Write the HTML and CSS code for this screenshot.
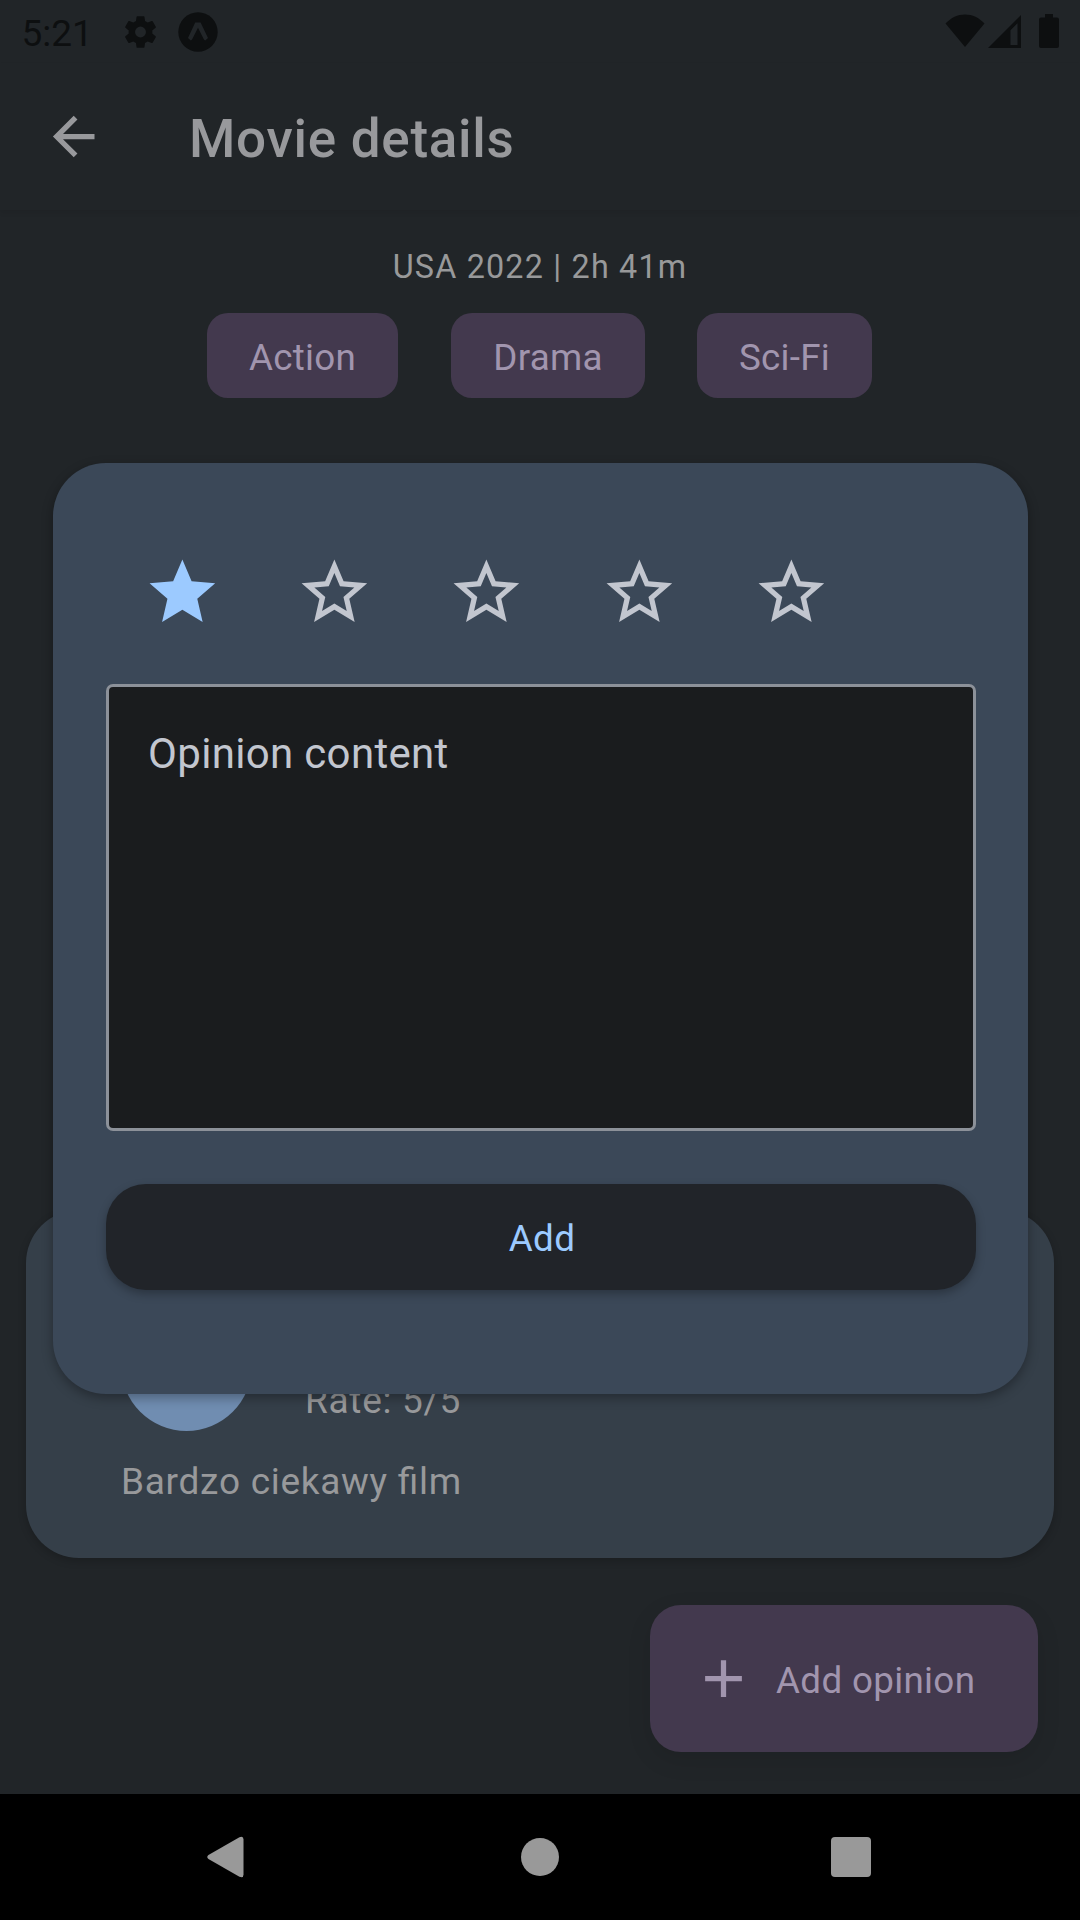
FILE: index.html
```html
<!DOCTYPE html>
<html lang="en">
<head>
<meta charset="utf-8">
<title>Movie details</title>
<link rel="stylesheet" href="styles.css">
</head>
<body>
<div class="screen">
  <div class="status-bar">
    <span class="clock">5:21</span>
    <svg class="gear" viewBox="2 2 20 20"><path d="M19.14 12.94c.04-.3.06-.61.06-.94 0-.32-.02-.64-.07-.94l2.03-1.58a.49.49 0 0 0 .12-.61l-1.92-3.32a.488.488 0 0 0-.59-.22l-2.39.96c-.5-.38-1.03-.7-1.62-.94l-.36-2.54a.484.484 0 0 0-.48-.41h-3.84c-.24 0-.43.17-.47.41l-.36 2.54c-.59.24-1.13.57-1.62.94l-2.39-.96c-.22-.08-.47 0-.59.22L2.74 8.87c-.12.21-.08.47.12.61l2.03 1.58c-.05.3-.09.63-.09.94s.02.64.07.94l-2.03 1.58a.49.49 0 0 0-.12.61l1.92 3.32c.12.22.37.29.59.22l2.39-.96c.5.38 1.03.7 1.62.94l.36 2.54c.05.24.24.41.48.41h3.84c.24 0 .44-.17.47-.41l.36-2.54c.59-.24 1.13-.56 1.62-.94l2.39.96c.22.08.47 0 .59-.22l1.92-3.32c.12-.22.07-.47-.12-.61l-2.01-1.58zM12 15.3a3.300 3.300 0 1 1 0-6.600 3.300 3.300 0 0 1 0 6.600z"/></svg>
    <svg class="expo" viewBox="0 0 40 40"><circle cx="20" cy="20" r="19.7"/><path class="expo-mark" d="M17.2 10.5h5.400l7.400 15.600-2.800 2.400c-.6-.1-1-.5-1.400-1.200L20 15.800l-5.800 11.500c-.4.7-.8 1.100-1.400 1.200L10 26.100z"/></svg>
    <span class="spacer"></span>
    <svg class="wifi" viewBox="0 0 40 33"><path d="M20 33 .5 9.500C6 3.500 12.500.4 20 .4s14 3.100 19.500 9.100z"/></svg>
    <svg class="signal" viewBox="0 0 33 33"><path fill-rule="evenodd" d="M0 33 33 0v33zM22.500 30h7V8.300l-7 7z"/></svg>
    <svg class="battery" viewBox="0 0 20 34"><path d="M6 0h8v3.500h4a2 2 0 0 1 2 2V32a2 2 0 0 1-2 2H2a2 2 0 0 1-2-2V5.500a2 2 0 0 1 2-2h4z"/></svg>
  </div>

  <header class="app-bar">
    <svg class="back" viewBox="0 0 24 24"><path d="M20 11v2H8l5.500 5.500-1.420 1.420L4.160 12l7.920-7.920L13.500 5.500 8 11z"/></svg>
    <h1 class="title">Movie details</h1>
  </header>

  <main class="content">
    <p class="meta">USA 2022 | 2h 41m</p>
    <div class="chips">
      <span class="chip chip-action">Action</span>
      <span class="chip chip-drama">Drama</span>
      <span class="chip chip-scifi">Sci-Fi</span>
    </div>
    <article class="review">
      <div class="review-head">
        <span class="avatar"></span>
        <span class="rate">Rate: 5/5</span>
      </div>
      <p class="review-text">Bardzo ciekawy film</p>
    </article>
    <button class="fab">
      <svg class="plus" viewBox="0 0 24 24"><path d="M19 13h-6v6h-2v-6H5v-2h6V5h2v6h6z"/></svg>
      <span>Add opinion</span>
    </button>
  </main>

  <nav class="nav-bar">
    <svg class="nav-back" viewBox="0 0 38 42"><path d="M33.300.7Q37.500-1 37.500 3v36q0 4-4.200 2.300L1.500 23q-2.500-2 0-4z"/></svg>
    <span class="nav-home"></span>
    <span class="nav-recent"></span>
  </nav>

  <section class="dialog">
    <div class="stars">
      <svg class="star star-on" viewBox="0 0 24 24"><path d="M12 17.270 18.180 21l-1.640-7.030L22 9.240l-7.190-.62L12 2 9.190 8.620 2 9.240l5.450 4.730L5.820 21z"/></svg>
      <svg class="star" viewBox="0 0 24 24"><path d="M12 15.390 8.240 17.660l.990-4.280-3.320-2.880 4.380-.370L12 6.090l1.710 4.040 4.380.370-3.320 2.880.990 4.280M22 9.240l-7.190-.610L12 2 9.190 8.630 2 9.240l5.450 4.730L5.820 21 12 17.270 18.180 21l-1.640-7.030z"/></svg>
      <svg class="star" viewBox="0 0 24 24"><path d="M12 15.390 8.240 17.660l.990-4.280-3.320-2.880 4.380-.370L12 6.090l1.710 4.040 4.380.370-3.320 2.880.990 4.280M22 9.240l-7.190-.610L12 2 9.190 8.630 2 9.240l5.450 4.730L5.820 21 12 17.270 18.180 21l-1.640-7.030z"/></svg>
      <svg class="star" viewBox="0 0 24 24"><path d="M12 15.390 8.240 17.660l.990-4.280-3.320-2.880 4.380-.370L12 6.090l1.710 4.040 4.380.370-3.320 2.880.990 4.280M22 9.240l-7.190-.610L12 2 9.190 8.630 2 9.240l5.450 4.730L5.820 21 12 17.270 18.180 21l-1.640-7.030z"/></svg>
      <svg class="star" viewBox="0 0 24 24"><path d="M12 15.390 8.240 17.660l.990-4.280-3.320-2.880 4.380-.370L12 6.090l1.710 4.040 4.380.370-3.320 2.880.990 4.280M22 9.240l-7.190-.610L12 2 9.190 8.630 2 9.240l5.450 4.730L5.820 21 12 17.270 18.180 21l-1.640-7.030z"/></svg>
    </div>
    <div class="field">Opinion content</div>
    <button class="submit">Add</button>
  </section>
</div>
</body>
</html>
```

FILE: styles.css
```css
* { box-sizing: border-box; }

body {
  margin: 0;
  background: #212528;
  font-family: Roboto, sans-serif;
}

h1, p { margin: 0; }
button { border: 0; font: inherit; }
svg { display: block; flex: none; }

.screen {
  position: relative;
  display: flex;
  flex-direction: column;
  width: 1080px;
  height: 1920px;
  overflow: hidden;
}

/* status bar */
.status-bar {
  display: flex;
  align-items: center;
  height: 63px;
  padding: 0 21px 0 21px;
  color: #0d0f10;
  fill: #0d0f10;
}
.clock { width: 102.500px; font-size: 37px; line-height: 63px; padding: 3px 0 0 0.500px; }
.gear { width: 33px; height: 34px; }
.expo { width: 40px; height: 40px; margin-left: 21px; }
.expo-mark { fill: #212528; }
.spacer { flex: 1; }
.wifi { width: 40px; height: 33px; margin-top: -3px; }
.signal { width: 33px; height: 33px; margin: -1px 0 0 3px; }
.battery { width: 20px; height: 34px; margin: -1px 0 0 18.500px; }

/* app bar */
.app-bar {
  display: flex;
  align-items: center;
  height: 147px;
  padding: 0 42px;
  box-shadow: 0 3px 5px rgba(0, 0, 0, 0.07);
}
.back { width: 63px; height: 63px; fill: #98999c; }
.title {
  margin-left: 84px;
  padding-top: 5px;
  color: #98999c;
  font-size: 53px;
  font-weight: 500;
  line-height: 70px;
  letter-spacing: 0.72px;
}

/* page content */
.content {
  display: flex;
  flex-direction: column;
  flex: 1;
}
.meta {
  margin-top: 36px;
  color: #98999a;
  font-size: 32.3px;
  line-height: 42px;
  letter-spacing: 1.2px;
  text-align: center;
}
.chips {
  display: flex;
  gap: 52px;
  margin-top: 25px;
  padding-left: 207px;
}
.chip {
  height: 85px;
  border-radius: 21px;
  background: #43394e;
  color: #a195ae;
  font-size: 36.75px;
  line-height: 89px;
  letter-spacing: 0.26px;
  text-align: center;
}
.chip-action { width: 191px; margin-right: 1px; }
.chip-drama { width: 194px; }
.chip-scifi { width: 175px; }

.review {
  height: 348px;
  margin: 812px 26px 0;
  padding: 90px 95px 0;
  border-radius: 53px;
  background: #353f49;
  box-shadow: 0 3px 8px rgba(0, 0, 0, 0.2);
  color: #98999b;
  font-size: 37px;
  line-height: 52px;
  letter-spacing: 0.72px;
  font-feature-settings: "liga" 1;
}
.review-head { display: flex; align-items: flex-end; height: 131px; }
.avatar {
  width: 131px;
  height: 131px;
  border-radius: 50%;
  background: #708db1;
}
.rate { margin: 0 0 4px 53px; }
.review-text { margin-top: 25px; }

.fab {
  display: flex;
  align-items: center;
  align-self: flex-end;
  width: 388px;
  height: 147px;
  margin: 47px 42px 0 0;
  padding: 0 0 0 42px;
  border-radius: 31px;
  background: #43394e;
  box-shadow: 0 8px 24px rgba(0, 0, 0, 0.1);
  color: #a195ae;
  font-size: 36.75px;
  letter-spacing: 0.34px;
}
.fab span { margin-left: 21px; padding-top: 4px; }
.plus { width: 63px; height: 63px; fill: #a195ae; }

/* system navigation */
.nav-bar {
  display: flex;
  align-items: center;
  height: 126px;
  padding-left: 207px;
  background: #000;
}
.nav-back { width: 37px; height: 42px; fill: #999; }
.nav-home {
  width: 38px;
  height: 38px;
  margin-left: 277px;
  border-radius: 50%;
  background: #999;
}
.nav-recent {
  width: 40px;
  height: 40px;
  margin-left: 272px;
  border-radius: 4px;
  background: #999;
}

/* rating dialog, floats over the page */
.dialog {
  position: absolute;
  top: 463px;
  left: 53px;
  display: flex;
  flex-direction: column;
  width: 975px;
  height: 931px;
  padding: 90px 52px 0 53px;
  border-radius: 53px;
  background: #3b4858;
  box-shadow: 0 4px 12px rgba(0, 0, 0, 0.32);
}
.stars { display: flex; gap: 73.5px; padding-left: 36.8px; }
.star { width: 78.75px; height: 78.75px; fill: #c2c6cf; }
.star-on { fill: #9ccaff; }
.field {
  height: 447px;
  margin-top: 52px;
  padding: 42px 39px;
  border: 3px solid #8c9199;
  border-radius: 7px;
  background: #1a1c1e;
  color: #c2c6cf;
  font-size: 42px;
  line-height: 50px;
  letter-spacing: 0.33px;
}
.submit {
  height: 106px;
  margin-top: 53px;
  border-radius: 40px;
  background: #212429;
  box-shadow: 0 4px 10px rgba(0, 0, 0, 0.28);
  color: #9ccaff;
  font-size: 36.75px;
  line-height: 110px;
  letter-spacing: 0.4px;
  padding: 0 0 0 2px;
}
```
